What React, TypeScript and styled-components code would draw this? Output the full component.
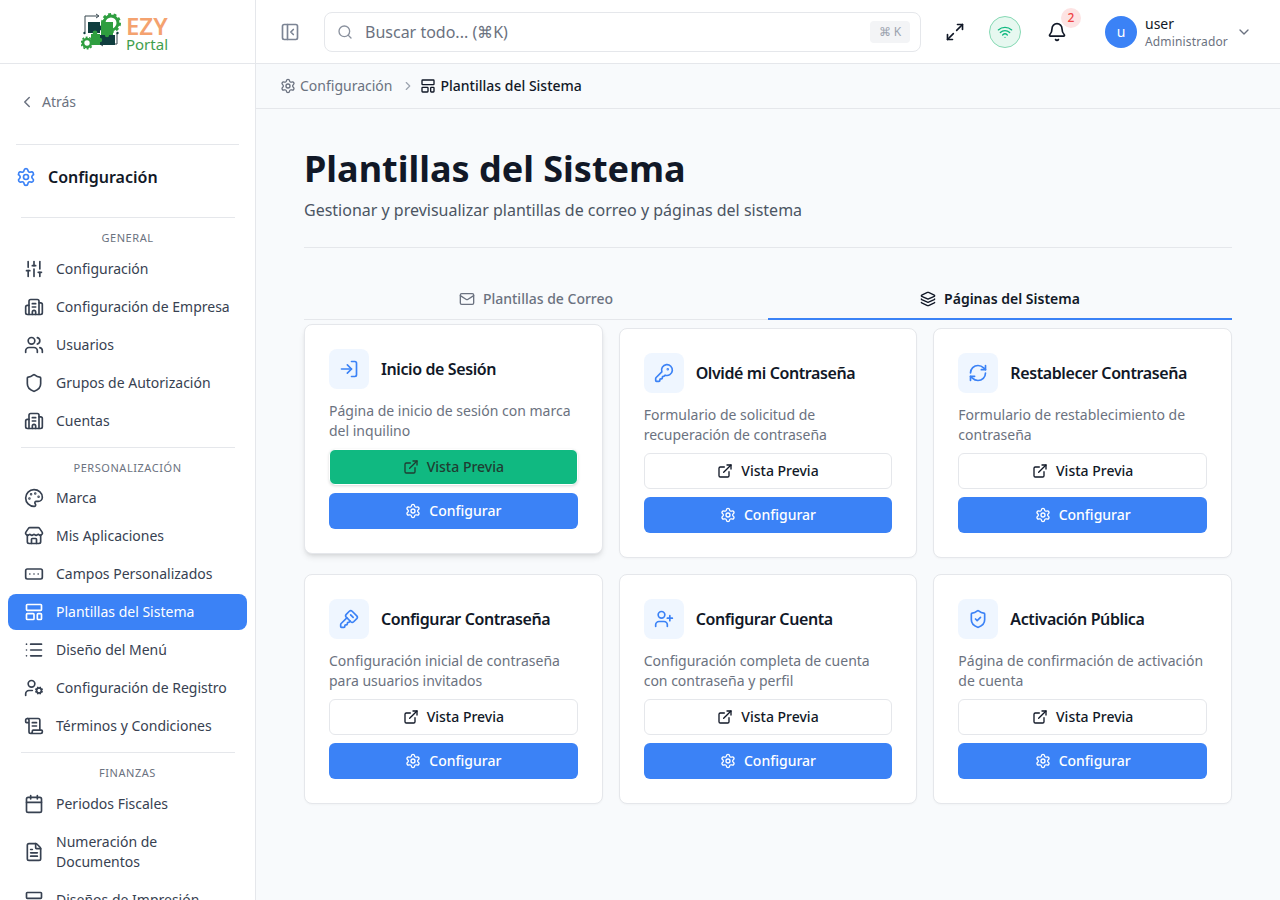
import React from 'react'
import styled, { createGlobalStyle } from 'styled-components'
import {
  Bell,
  Building2,
  Calendar,
  ChevronDown,
  ChevronLeft,
  ChevronRight,
  ExternalLink,
  FileText,
  KeyRound,
  KeySquare,
  Layers,
  LayoutTemplate,
  List,
  LogIn,
  LucideIcon,
  Mail,
  Maximize2,
  Palette,
  PanelLeftClose,
  RectangleEllipsis,
  RefreshCw,
  ScrollText,
  Search,
  Settings,
  Shield,
  ShieldCheck,
  SlidersVertical,
  Store,
  UserCog,
  UserPlus,
  Users,
  Wifi,
} from 'lucide-react'

type NavItem = { label: string; icon: LucideIcon; active?: boolean }
type NavSection = { title: string; items: NavItem[] }
type Template = {
  title: string
  text: string
  icon: LucideIcon
  hovered?: boolean
}

const sections: NavSection[] = [
  {
    title: 'General',
    items: [
      { label: 'Configuración', icon: SlidersVertical },
      { label: 'Configuración de Empresa', icon: Building2 },
      { label: 'Usuarios', icon: Users },
      { label: 'Grupos de Autorización', icon: Shield },
      { label: 'Cuentas', icon: Building2 },
    ],
  },
  {
    title: 'Personalización',
    items: [
      { label: 'Marca', icon: Palette },
      { label: 'Mis Aplicaciones', icon: Store },
      { label: 'Campos Personalizados', icon: RectangleEllipsis },
      { label: 'Plantillas del Sistema', icon: LayoutTemplate, active: true },
      { label: 'Diseño del Menú', icon: List },
      { label: 'Configuración de Registro', icon: UserCog },
      { label: 'Términos y Condiciones', icon: ScrollText },
    ],
  },
  {
    title: 'Finanzas',
    items: [
      { label: 'Periodos Fiscales', icon: Calendar },
      { label: 'Numeración de Documentos', icon: FileText },
      { label: 'Diseños de Impresión', icon: LayoutTemplate },
    ],
  },
]

const templates: Template[] = [
  {
    title: 'Inicio de Sesión',
    text: 'Página de inicio de sesión con marca del inquilino',
    icon: LogIn,
    hovered: true,
  },
  {
    title: 'Olvidé mi Contraseña',
    text: 'Formulario de solicitud de recuperación de contraseña',
    icon: KeyRound,
  },
  {
    title: 'Restablecer Contraseña',
    text: 'Formulario de restablecimiento de contraseña',
    icon: RefreshCw,
  },
  {
    title: 'Configurar Contraseña',
    text: 'Configuración inicial de contraseña para usuarios invitados',
    icon: KeySquare,
  },
  {
    title: 'Configurar Cuenta',
    text: 'Configuración completa de cuenta con contraseña y perfil',
    icon: UserPlus,
  },
  {
    title: 'Activación Pública',
    text: 'Página de confirmación de activación de cuenta',
    icon: ShieldCheck,
  },
]

function LogoMark() {
  return (
    <svg width="42" height="40" viewBox="0 0 42 40" fill="none">
      {/* arrows round the puzzle */}
      <path d="M4 20V4h13" stroke="#37474f" strokeWidth="1" />
      <path d="M15 2l3 2-3 2" stroke="#37474f" strokeWidth="1" />
      <path d="M36 21v11H20" stroke="#37474f" strokeWidth="1" />
      <path d="M22 30l-3 2 3 2" stroke="#37474f" strokeWidth="1" />
      <circle cx="3.5" cy="21" r="1.2" fill="#0f3d3e" />
      <circle cx="36.5" cy="21" r="1.2" fill="#0f3d3e" />
      {/* gears */}
      <circle cx="30" cy="11" r="7" stroke="#2e9e3f" strokeWidth="3" />
      <circle cx="30" cy="11" r="9" stroke="#2e9e3f" strokeWidth="2" strokeDasharray="3 2.6" />
      <circle cx="6" cy="31" r="4" stroke="#2e9e3f" strokeWidth="2.6" />
      <circle cx="6" cy="31" r="5.8" stroke="#2e9e3f" strokeWidth="1.4" strokeDasharray="2 1.6" />
      {/* puzzle */}
      <rect x="7" y="10" width="12" height="11" fill="#0f3d3e" />
      <rect x="19" y="23" width="15" height="10" fill="#0f3d3e" />
      <circle cx="20" cy="16" r="2.4" fill="#0f3d3e" />
      <rect x="20" y="10" width="12" height="13" fill="#2e9e3f" />
      <circle cx="26" cy="23" r="2.2" fill="#2e9e3f" />
      <rect x="10" y="22" width="9" height="11" fill="#2e9e3f" />
      <circle cx="14" cy="21" r="2.4" fill="#2e9e3f" />
      <circle cx="19" cy="28" r="2.2" fill="#2e9e3f" />
    </svg>
  )
}

export default function App() {
  return (
    <>
      <GlobalStyle />
      <Page>
        <Sidebar>
          <LogoBar>
            <LogoMark />
            <LogoText>
              <span className="ezy">EZY</span>
              <span className="portal">Portal</span>
            </LogoText>
          </LogoBar>
          <SidebarBody>
            <BackLink>
              <ChevronLeft size={18} />
              Atrás
            </BackLink>
            <SidebarTitle>
              <Settings size={20} color="#3b82f6" />
              Configuración
            </SidebarTitle>
            {sections.map((section) => (
              <Section key={section.title}>
                <SectionLabel>{section.title}</SectionLabel>
                <NavList>
                  {section.items.map((item) => (
                    <NavRow key={item.label} $active={item.active}>
                      <item.icon size={20} />
                      <span>{item.label}</span>
                    </NavRow>
                  ))}
                </NavList>
              </Section>
            ))}
          </SidebarBody>
        </Sidebar>
        <Main>
          <TopBar>
            <IconButton>
              <PanelLeftClose size={20} color="#7b8494" />
            </IconButton>
            <SearchBox>
              <Search size={16} color="#8a919e" />
              <SearchText>Buscar todo... (⌘K)</SearchText>
              <Kbd>⌘ K</Kbd>
            </SearchBox>
            <Expand>
              <Maximize2 size={20} />
            </Expand>
            <Status>
              <Wifi size={16} />
            </Status>
            <BellWrap>
              <Bell size={20} />
              <Badge>2</Badge>
            </BellWrap>
            <UserBox>
              <Avatar>u</Avatar>
              <UserData>
                <span className="name">user</span>
                <span className="role">Administrador</span>
              </UserData>
              <ChevronDown size={16} color="#6b7280" />
            </UserBox>
          </TopBar>
          <Breadcrumb>
            <Settings size={16} />
            <span>Configuración</span>
            <Separator>
              <ChevronRight size={14} />
            </Separator>
            <Current>
              <LayoutTemplate size={16} />
              <span>Plantillas del Sistema</span>
            </Current>
          </Breadcrumb>
          <Content>
            <PageTitle>Plantillas del Sistema</PageTitle>
            <PageText>
              Gestionar y previsualizar plantillas de correo y páginas del
              sistema
            </PageText>
            <Tabs>
              <Tab>
                <Mail size={16} />
                Plantillas de Correo
              </Tab>
              <Tab $active>
                <Layers size={16} />
                Páginas del Sistema
              </Tab>
            </Tabs>
            <CardGrid>
              {templates.map((t) => (
                <Card key={t.title} $hovered={t.hovered}>
                  <CardHead>
                    <CardIcon>
                      <t.icon size={20} />
                    </CardIcon>
                    <CardTitle>{t.title}</CardTitle>
                  </CardHead>
                  <CardText>{t.text}</CardText>
                  <PreviewButton $hovered={t.hovered}>
                    <ExternalLink size={16} />
                    Vista Previa
                  </PreviewButton>
                  <ConfigButton>
                    <Settings size={16} />
                    Configurar
                  </ConfigButton>
                </Card>
              ))}
            </CardGrid>
          </Content>
        </Main>
      </Page>
    </>
  )
}

const GlobalStyle = createGlobalStyle`
  * {
    box-sizing: border-box;
  }

  body {
    margin: 0;
    overflow: hidden;
    font-family: 'Noto Sans', sans-serif;
    color: #111827;
    background: #f8fafc;
  }
`

const Page = styled.div`
  display: flex;
  width: 1280px;
  height: 900px;
  overflow: hidden;
`

const Sidebar = styled.aside`
  flex: 0 0 256px;
  display: flex;
  flex-direction: column;
  background: #fff;
  border-right: 1px solid #e5e7eb;
  overflow: hidden;
`

const LogoBar = styled.div`
  flex: 0 0 64px;
  display: flex;
  align-items: center;
  justify-content: center;
  gap: 3px;
  padding-right: 6px;
  border-bottom: 1px solid #e5e7eb;
`

const LogoText = styled.div`
  display: flex;
  flex-direction: column;
  margin-top: 3px;

  .ezy {
    font-size: 24px;
    line-height: 22px;
    font-weight: 600;
    color: #f4a26f;
  }

  .portal {
    font-size: 15px;
    line-height: 14px;
    color: #3f9e4d;
  }
`

const SidebarBody = styled.div`
  display: flex;
  flex-direction: column;
`

const BackLink = styled.div`
  display: flex;
  align-items: center;
  gap: 6px;
  height: 36px;
  margin: 20px 16px 24px;
  padding-left: 2px;
  font-size: 14px;
  line-height: 20px;
  color: #6b7280;
`

const SidebarTitle = styled.div`
  display: flex;
  align-items: center;
  gap: 12px;
  height: 73px;
  margin: 0 16px;
  padding-bottom: 8px;
  font-size: 16px;
  line-height: 24px;
  font-weight: 600;
  color: #111827;
  border-top: 1px solid #e5e7eb;
`

const Section = styled.section`
  padding: 0 8px 8px;

  &::before {
    content: '';
    display: block;
    height: 1px;
    margin: 0 12px 12px 13px;
    background: #e5e7eb;
  }
`

const SectionLabel = styled.div`
  height: 16px;
  margin-bottom: 5px;
  font-size: 11px;
  line-height: 16px;
  letter-spacing: 0.55px;
  text-align: center;
  text-transform: uppercase;
  color: #6b7280;

  ${Section}:nth-of-type(2) & {
    margin-bottom: 4px;
  }
`

const NavList = styled.div`
  display: flex;
  flex-direction: column;
  gap: 2px;
`

const NavRow = styled.div<{ $active?: boolean }>`
  display: flex;
  align-items: center;
  gap: 12px;
  padding: 8px 16px;
  border-radius: 8px;
  font-size: 14px;
  line-height: 20px;
  color: ${({ $active }) => ($active ? '#fff' : '#374151')};
  background: ${({ $active }) => ($active ? '#3b82f6' : 'transparent')};

  svg {
    flex: none;
  }
`

const Main = styled.div`
  flex: 1;
  min-width: 0;
  display: flex;
  flex-direction: column;
`

const TopBar = styled.header`
  flex: 0 0 64px;
  display: flex;
  align-items: center;
  padding: 0 24px;
  background: #fff;
  border-bottom: 1px solid #e5e7eb;
`

const IconButton = styled.div`
  display: flex;
  width: 20px;
  margin-right: 24px;
`

const SearchBox = styled.div`
  flex: none;
  display: flex;
  align-items: center;
  width: 597px;
  height: 40px;
  padding: 0 10px 0 12px;
  border: 1px solid #e5e7eb;
  border-radius: 8px;
  background: #fff;
`

const SearchText = styled.span`
  flex: 1;
  margin-left: 12px;
  font-size: 16px;
  line-height: 24px;
  color: #6b7280;
`

const Kbd = styled.span`
  width: 40px;
  height: 22px;
  border-radius: 4px;
  background: #f3f4f6;
  font-size: 12px;
  line-height: 22px;
  text-align: center;
  color: #9ca3af;
`

const Expand = styled.div`
  display: flex;
  margin-left: 24px;
  color: #111827;
`

const Status = styled.div`
  display: flex;
  align-items: center;
  justify-content: center;
  width: 32px;
  height: 32px;
  margin-left: 24px;
  border: 1px solid #86d9b4;
  border-radius: 50%;
  background: #e7f8f0;
  color: #10b981;
`

const BellWrap = styled.div`
  position: relative;
  display: flex;
  margin-left: 26px;
  color: #111827;
`

const Badge = styled.span`
  position: absolute;
  top: -14px;
  left: 14px;
  width: 20px;
  height: 20px;
  border-radius: 50%;
  background: #fde3e3;
  font-size: 12px;
  font-weight: 500;
  line-height: 20px;
  text-align: center;
  color: #ef4444;
`

const UserBox = styled.div`
  flex: none;
  display: flex;
  align-items: center;
  margin-left: 38px;
  gap: 8px;
`

const Avatar = styled.div`
  width: 32px;
  height: 32px;
  border-radius: 50%;
  background: #3b82f6;
  color: #fff;
  font-size: 14px;
  line-height: 32px;
  text-align: center;
`

const UserData = styled.div`
  display: flex;
  flex-direction: column;

  .name {
    font-size: 14px;
    line-height: 20px;
    color: #111827;
  }

  .role {
    font-size: 12px;
    line-height: 16px;
    letter-spacing: 0.15px;
    color: #6b7280;
  }
`

const Breadcrumb = styled.nav`
  flex: 0 0 45px;
  display: flex;
  align-items: center;
  gap: 4px;
  padding: 0 24px;
  border-bottom: 1px solid #e5e7eb;
  font-size: 14px;
  line-height: 20px;
  color: #6b7280;
`

const Separator = styled.span`
  display: flex;
  margin: 0 1px 0 5px;
  color: #9ca3af;
`

const Current = styled.span`
  display: flex;
  align-items: center;
  gap: 4px;
  font-weight: 500;
  color: #111827;
`

const Content = styled.main`
  flex: 1;
  padding: 36px 48px 0;
`

const PageTitle = styled.h1`
  margin: 0;
  font-size: 36px;
  line-height: 48px;
  font-weight: 700;
  color: #111827;
`

const PageText = styled.p`
  margin: 5px 0 0;
  padding-bottom: 25px;
  font-size: 16px;
  line-height: 24px;
  color: #4b5563;
  border-bottom: 1px solid #e5e7eb;
`

const Tabs = styled.div`
  display: grid;
  grid-template-columns: 1fr 1fr;
  margin-top: 32px;
  border-bottom: 1px solid #e5e7eb;
`

const Tab = styled.div<{ $active?: boolean }>`
  display: flex;
  align-items: center;
  justify-content: center;
  gap: 8px;
  height: 40px;
  margin-bottom: -1px;
  font-size: 14px;
  line-height: 20px;
  font-weight: ${({ $active }) => ($active ? 600 : 500)};
  color: ${({ $active }) => ($active ? '#111827' : '#6b7280')};
  border-bottom: 2px solid
    ${({ $active }) => ($active ? '#3b82f6' : 'transparent')};
`

const CardGrid = styled.div`
  display: grid;
  grid-template-columns: repeat(3, 1fr);
  gap: 16px;
  margin-top: 8px;
`

const Card = styled.div<{ $hovered?: boolean }>`
  display: flex;
  flex-direction: column;
  padding: 24px;
  border: 1px solid #e5e7eb;
  border-radius: 8px;
  background: #fff;
  transform: ${({ $hovered }) => ($hovered ? 'translateY(-4px)' : 'none')};
  box-shadow: ${({ $hovered }) =>
    $hovered
      ? '0 4px 6px -1px rgba(0,0,0,.1), 0 2px 4px -2px rgba(0,0,0,.1)'
      : '0 1px 2px rgba(0,0,0,.03)'};
`

const CardHead = styled.div`
  display: flex;
  align-items: center;
  gap: 12px;
`

const CardIcon = styled.div`
  display: flex;
  align-items: center;
  justify-content: center;
  width: 40px;
  height: 40px;
  border-radius: 8px;
  background: #eff6ff;
  color: #3b82f6;
`

const CardTitle = styled.h3`
  margin: 0;
  font-size: 16px;
  line-height: 24px;
  font-weight: 600;
  letter-spacing: -0.4px;
  color: #111827;
`

const CardText = styled.p`
  height: 40px;
  margin: 12px 0 8px;
  font-size: 14px;
  line-height: 20px;
  color: #6b7280;
`

const PreviewButton = styled.div<{ $hovered?: boolean }>`
  display: flex;
  align-items: center;
  justify-content: center;
  gap: 8px;
  height: 36px;
  border: 1px solid ${({ $hovered }) => ($hovered ? '#fff' : '#e5e7eb')};
  border-radius: 6px;
  font-size: 14px;
  line-height: 20px;
  font-weight: 500;
  color: ${({ $hovered }) => ($hovered ? '#1f3d32' : '#111827')};
  background: ${({ $hovered }) => ($hovered ? '#10b981' : '#fff')};
  box-shadow: ${({ $hovered }) =>
    $hovered ? '0 1px 3px rgba(0,0,0,.15)' : 'none'};
`

const ConfigButton = styled.div`
  display: flex;
  align-items: center;
  justify-content: center;
  gap: 8px;
  height: 36px;
  margin-top: 8px;
  border-radius: 6px;
  font-size: 14px;
  line-height: 20px;
  font-weight: 500;
  color: #fff;
  background: #3b82f6;
`
